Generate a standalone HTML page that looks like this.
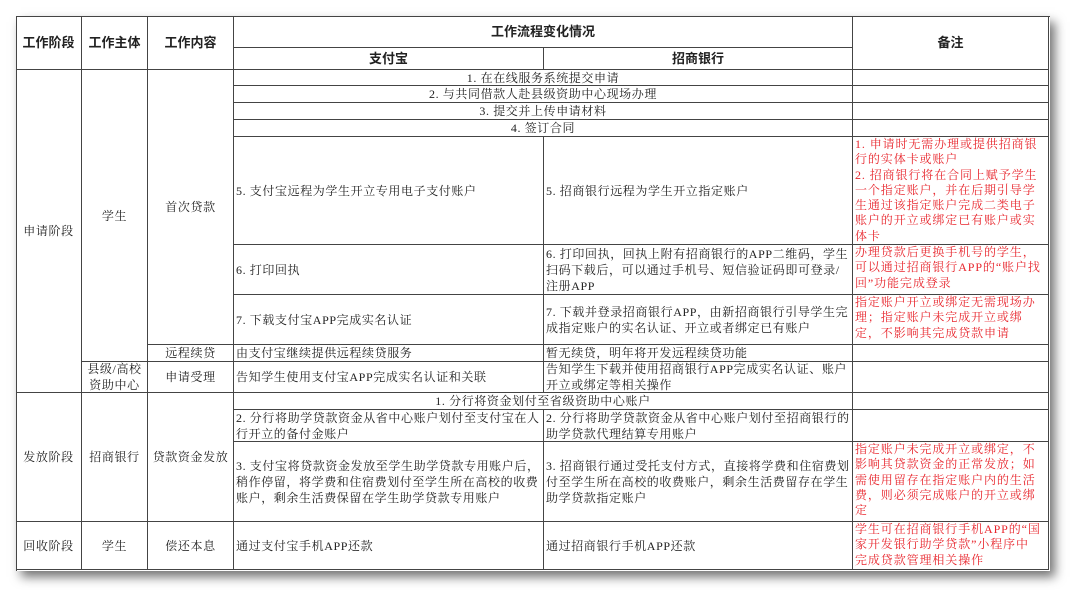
<!DOCTYPE html>
<html><head><meta charset="utf-8"><style>
body{margin:0;width:1080px;height:590px;background:#fff;position:relative;overflow:hidden;font-family:"Liberation Serif","Noto Serif CJK SC",serif;color:#222}
#box{position:absolute;left:16px;top:16px;width:1033px;height:554px;border-left:1px solid #444;border-top:1px solid #444;box-shadow:5px 6px 10px rgba(0,0,0,.55);background:#fff}
.c{position:absolute;box-sizing:border-box;border-right:1px solid #444;border-bottom:1px solid #444;display:flex;align-items:center;padding:0 2px;font-size:12px;line-height:16px;white-space:nowrap;overflow:hidden;letter-spacing:0.6px}
.m{justify-content:center;text-align:center}
.h{font-family:"Liberation Sans","Noto Sans CJK SC",sans-serif;font-weight:bold;font-size:13px;letter-spacing:0}
.r{color:#e8262d;align-items:flex-start;line-height:15.3px;letter-spacing:0.9px;padding-top:0}
</style></head><body>
<div id="box"></div>
<div class="c m h" style="left:16px;top:16px;width:66px;height:54px">工作阶段</div>
<div class="c m h" style="left:82px;top:16px;width:66px;height:54px">工作主体</div>
<div class="c m h" style="left:148px;top:16px;width:86px;height:54px">工作内容</div>
<div class="c m h" style="left:234px;top:16px;width:619px;height:32px">工作流程变化情况</div>
<div class="c m h" style="left:234px;top:48px;width:310px;height:22px">支付宝</div>
<div class="c m h" style="left:544px;top:48px;width:309px;height:22px">招商银行</div>
<div class="c m h" style="left:853px;top:16px;width:196px;height:54px">备注</div>
<div class="c m" style="left:16px;top:70px;width:66px;height:323px">申请阶段</div>
<div class="c m" style="left:82px;top:70px;width:66px;height:292px">学生</div>
<div class="c m" style="left:148px;top:70px;width:86px;height:275px">首次贷款</div>
<div class="c m" style="left:148px;top:345px;width:86px;height:17px">远程续贷</div>
<div class="c m" style="left:82px;top:362px;width:66px;height:31px">县级/高校<br>资助中心</div>
<div class="c m" style="left:148px;top:362px;width:86px;height:31px">申请受理</div>
<div class="c m" style="left:234px;top:70px;width:619px;height:16px">1. 在在线服务系统提交申请</div>
<div class="c" style="left:853px;top:70px;width:196px;height:16px"></div>
<div class="c m" style="left:234px;top:86px;width:619px;height:17px">2. 与共同借款人赴县级资助中心现场办理</div>
<div class="c" style="left:853px;top:86px;width:196px;height:17px"></div>
<div class="c m" style="left:234px;top:103px;width:619px;height:17px">3. 提交并上传申请材料</div>
<div class="c" style="left:853px;top:103px;width:196px;height:17px"></div>
<div class="c m" style="left:234px;top:120px;width:619px;height:17px">4. 签订合同</div>
<div class="c" style="left:853px;top:120px;width:196px;height:17px"></div>
<div class="c" style="left:234px;top:137px;width:310px;height:108px">5. 支付宝远程为学生开立专用电子支付账户</div>
<div class="c" style="left:544px;top:137px;width:309px;height:108px">5. 招商银行远程为学生开立指定账户</div>
<div class="c r" style="left:853px;top:137px;width:196px;height:108px">1. 申请时无需办理或提供招商银<br>行的实体卡或账户<br>2. 招商银行将在合同上赋予学生<br>一个指定账户，并在后期引导学<br>生通过该指定账户完成二类电子<br>账户的开立或绑定已有账户或实<br>体卡</div>
<div class="c" style="left:234px;top:245px;width:310px;height:50px">6. 打印回执</div>
<div class="c" style="left:544px;top:245px;width:309px;height:50px">6. 打印回执，回执上附有招商银行的APP二维码，学生<br>扫码下载后，可以通过手机号、短信验证码即可登录/<br>注册APP</div>
<div class="c r" style="left:853px;top:245px;width:196px;height:50px">办理贷款后更换手机号的学生，<br>可以通过招商银行APP的“账户找<br>回”功能完成登录</div>
<div class="c" style="left:234px;top:295px;width:310px;height:50px">7. 下载支付宝APP完成实名认证</div>
<div class="c" style="left:544px;top:295px;width:309px;height:50px">7. 下载并登录招商银行APP，由新招商银行引导学生完<br>成指定账户的实名认证、开立或者绑定已有账户</div>
<div class="c r" style="left:853px;top:295px;width:196px;height:50px">指定账户开立或绑定无需现场办<br>理；指定账户未完成开立或绑<br>定，不影响其完成贷款申请</div>
<div class="c" style="left:234px;top:345px;width:310px;height:17px">由支付宝继续提供远程续贷服务</div>
<div class="c" style="left:544px;top:345px;width:309px;height:17px">暂无续贷，明年将开发远程续贷功能</div>
<div class="c" style="left:853px;top:345px;width:196px;height:17px"></div>
<div class="c" style="left:234px;top:362px;width:310px;height:31px">告知学生使用支付宝APP完成实名认证和关联</div>
<div class="c" style="left:544px;top:362px;width:309px;height:31px">告知学生下载并使用招商银行APP完成实名认证、账户<br>开立或绑定等相关操作</div>
<div class="c" style="left:853px;top:362px;width:196px;height:31px"></div>
<div class="c m" style="left:16px;top:393px;width:66px;height:129px">发放阶段</div>
<div class="c m" style="left:82px;top:393px;width:66px;height:129px">招商银行</div>
<div class="c m" style="left:148px;top:393px;width:86px;height:129px">贷款资金发放</div>
<div class="c m" style="left:234px;top:393px;width:619px;height:17px">1. 分行将资金划付至省级资助中心账户</div>
<div class="c" style="left:853px;top:393px;width:196px;height:17px"></div>
<div class="c" style="left:234px;top:410px;width:310px;height:32px">2. 分行将助学贷款资金从省中心账户划付至支付宝在人<br>行开立的备付金账户</div>
<div class="c" style="left:544px;top:410px;width:309px;height:32px">2. 分行将助学贷款资金从省中心账户划付至招商银行的<br>助学贷款代理结算专用账户</div>
<div class="c" style="left:853px;top:410px;width:196px;height:32px"></div>
<div class="c" style="left:234px;top:442px;width:310px;height:80px">3. 支付宝将贷款资金发放至学生助学贷款专用账户后，<br>稍作停留，将学费和住宿费划付至学生所在高校的收费<br>账户，剩余生活费保留在学生助学贷款专用账户</div>
<div class="c" style="left:544px;top:442px;width:309px;height:80px">3. 招商银行通过受托支付方式，直接将学费和住宿费划<br>付至学生所在高校的收费账户，剩余生活费留存在学生<br>助学贷款指定账户</div>
<div class="c r" style="left:853px;top:442px;width:196px;height:80px">指定账户未完成开立或绑定，不<br>影响其贷款资金的正常发放；如<br>需使用留存在指定账户内的生活<br>费，则必须完成账户的开立或绑<br>定</div>
<div class="c m" style="left:16px;top:522px;width:66px;height:48px">回收阶段</div>
<div class="c m" style="left:82px;top:522px;width:66px;height:48px">学生</div>
<div class="c m" style="left:148px;top:522px;width:86px;height:48px">偿还本息</div>
<div class="c" style="left:234px;top:522px;width:310px;height:48px">通过支付宝手机APP还款</div>
<div class="c" style="left:544px;top:522px;width:309px;height:48px">通过招商银行手机APP还款</div>
<div class="c r" style="left:853px;top:522px;width:196px;height:48px">学生可在招商银行手机APP的“国<br>家开发银行助学贷款”小程序中<br>完成贷款管理相关操作</div>
</body></html>
